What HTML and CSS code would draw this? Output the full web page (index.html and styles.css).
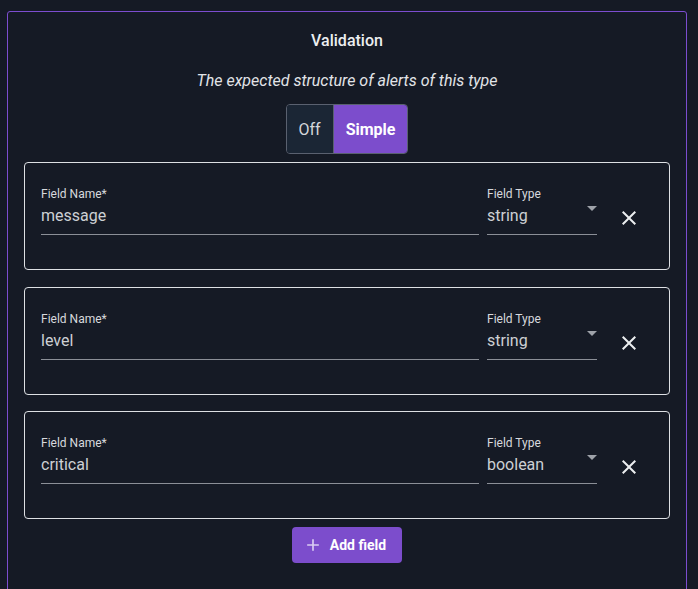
FILE: index.html
```html
<!DOCTYPE html>
<html>
<head>
<meta charset="utf-8">
<link rel="stylesheet" href="styles.css">
</head>
<body>
<div class="panel">
  <div class="title">Validation</div>
  <div class="subtitle">The expected structure of alerts of this type</div>
  <div class="toggle">
    <div class="tog off">Off</div>
    <div class="tog on">Simple</div>
  </div>
  <div class="cards">
    <div class="card">
      <div class="field name">
        <div class="label">Field Name*</div>
        <div class="value">message</div>
      </div>
      <div class="field type">
        <div class="label">Field Type</div>
        <div class="value"><span>string</span><span class="arrow"></span></div>
      </div>
      <div class="close"><svg viewBox="0 0 24 24" width="24" height="24"><path d="M19 6.41 17.59 5 12 10.59 6.41 5 5 6.41 10.59 12 5 17.59 6.41 19 12 13.41 17.59 19 19 17.59 13.41 12z" fill="currentColor"/></svg></div>
    </div>
    <div class="card">
      <div class="field name">
        <div class="label">Field Name*</div>
        <div class="value">level</div>
      </div>
      <div class="field type">
        <div class="label">Field Type</div>
        <div class="value"><span>string</span><span class="arrow"></span></div>
      </div>
      <div class="close"><svg viewBox="0 0 24 24" width="24" height="24"><path d="M19 6.41 17.59 5 12 10.59 6.41 5 5 6.41 10.59 12 5 17.59 6.41 19 12 13.41 17.59 19 19 17.59 13.41 12z" fill="currentColor"/></svg></div>
    </div>
    <div class="card">
      <div class="field name">
        <div class="label">Field Name*</div>
        <div class="value">critical</div>
      </div>
      <div class="field type">
        <div class="label">Field Type</div>
        <div class="value"><span>boolean</span><span class="arrow"></span></div>
      </div>
      <div class="close"><svg viewBox="0 0 24 24" width="24" height="24"><path d="M19 6.41 17.59 5 12 10.59 6.41 5 5 6.41 10.59 12 5 17.59 6.41 19 12 13.41 17.59 19 19 17.59 13.41 12z" fill="currentColor"/></svg></div>
    </div>
  </div>
  <div class="actions">
    <div class="add-btn"><svg class="plus" viewBox="0 0 24 24" width="20" height="20"><path d="M19 13h-6v6h-2v-6H5v-2h6V5h2v6h6v2z" fill="currentColor"/></svg><span>Add field</span></div>
  </div>
</div>
</body>
</html>
```
FILE: styles.css
```css
html, body {
  margin: 0;
  padding: 0;
  background: #151a25;
  font-family: Roboto, "Liberation Sans", sans-serif;
  color: #e6e6e6;
  height: 589px;
  overflow: hidden;
}
.panel {
  margin: 11px 0 0 7px;
  border: 1px solid #7c4dd0;
  border-radius: 3px;
  padding: 17px 16px 0 16px;
  box-sizing: border-box;
  width: 680px;
  height: 610px;
  display: flex;
  flex-direction: column;
  align-items: stretch;
}
.title {
  text-align: center;
  font-size: 16px;
  font-weight: 500;
  line-height: 24px;
  color: #eceef0;
}
.subtitle {
  margin-top: 16px;
  text-align: center;
  font-size: 16px;
  font-style: italic;
  line-height: 24px;
  color: #e2e4e8;
}
.toggle {
  margin: 11px auto 0;
  display: flex;
  border: 1px solid #5a6170;
  border-radius: 4px;
  overflow: hidden;
  height: 48px;
}
.tog {
  display: flex;
  align-items: center;
  padding: 0 12px;
  font-size: 16px;
}
.tog.off {
  background: #1b2635;
  color: #d4d6da;
  border-right: 1px solid #5a6170;
}
.tog.on {
  background: #7c4dcc;
  color: #ffffff;
  font-weight: 700;
}
.cards {
  margin-top: 8px;
  display: flex;
  flex-direction: column;
  gap: 16.5px;
}
.card {
  border: 1px solid #dde0e4;
  border-radius: 4px;
  height: 108px;
  box-sizing: border-box;
  padding: 23px 19px 0 16px;
  display: flex;
  align-items: flex-start;
}
.field {
  display: flex;
  flex-direction: column;
}
.field.name {
  width: 438px;
}
.field.type {
  margin-left: 8px;
  width: 110px;
}
.label {
  font-size: 12px;
  line-height: 16px;
  color: #d7d9dd;
}
.value {
  margin-top: 4px;
  font-size: 16px;
  line-height: 20px;
  color: #cdd0d4;
  padding-bottom: 8px;
  border-bottom: 1px solid #8b8f97;
  display: flex;
  justify-content: space-between;
  align-items: flex-start;
}
.arrow {
  width: 0;
  height: 0;
  margin-top: 0;
  border-left: 5px solid transparent;
  border-right: 5px solid transparent;
  border-top: 5px solid #9ea2a9;
}
.close {
  margin-left: 12px;
  width: 40px;
  height: 40px;
  margin-top: 12px;
  display: flex;
  align-items: center;
  justify-content: center;
  color: #eceef0;
}
.actions {
  margin-top: 8px;
  display: flex;
  justify-content: center;
}
.add-btn {
  display: flex;
  align-items: center;
  white-space: nowrap;
  background: #7c4dcc;
  border-radius: 4px;
  height: 36px;
  box-sizing: border-box;
  padding: 0 16px 0 11px;
  color: #ffffff;
  font-size: 14px;
  font-weight: 700;
}
.plus {
  color: #d9ccf2;
  margin-right: 7px;
}
```
